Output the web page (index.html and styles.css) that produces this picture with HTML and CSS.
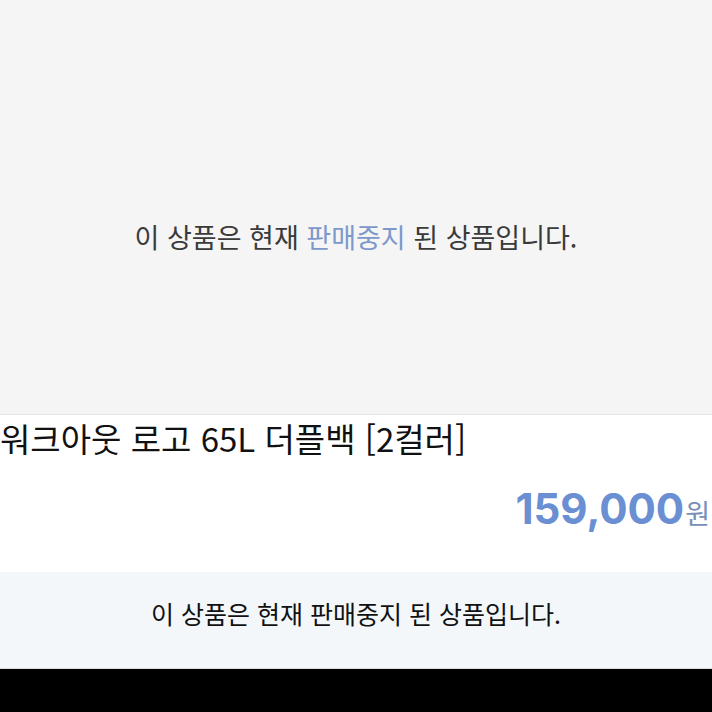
FILE: index.html
```html
<!DOCTYPE html>
<html lang="ko">

<head>
    <meta charset="UTF-8">
    <meta name="viewport" content="width=device-width, initial-scale=1.0">
    <title>상품 상세</title>
    <link rel="stylesheet" href="styles.css">
</head>

<body>
    <section class="product_pic">
        <p class="sold_out">이 상품은 현재 <span class="point">판매중지</span> 된 상품입니다.</p>
    </section>

    <section class="product_info">
        <h2 class="name">워크아웃 로고 65L 더플백 [2컬러]</h2>
        <div class="price">
            <strong>159,000</strong><span class="won">원</span>
        </div>
    </section>

    <div class="stop_bar">
        <p>이 상품은 현재 판매중지 된 상품입니다.</p>
    </div>

    <div class="bottom_black"></div>
</body>

</html>
```

FILE: styles.css
```css
* {
    box-sizing: border-box;
}

body {
    margin: 0;
    font-family: "Noto Sans CJK KR", "Noto Sans", sans-serif;
    background: #000;
}

.product_pic {
    height: 415px;
    background: #f5f5f5;
    border-bottom: 1px solid #e4e4e4;
    display: flex;
    justify-content: center;
    padding-top: 218px;
}

.sold_out {
    margin: 0;
    font-size: 27px;
    line-height: 38px;
    color: #3a3a3a;
}

.sold_out .point {
    color: #7d98cb;
}

.product_info {
    background: #fff;
    height: 157px;
    padding: 0 2px 0 0;
}

.name {
    margin: 0;
    font-size: 33px;
    font-weight: 400;
    line-height: 46px;
    color: #111;
}

.price {
    text-align: right;
    margin-top: 22px;
    color: #6a8fd2;
}

.price strong {
    font-family: Inter, "Liberation Sans", sans-serif;
    font-size: 42px;
    font-weight: 700;
}

.price .won {
    font-size: 27px;
    color: #7890b8;
    margin-left: 1px;
}

.stop_bar {
    height: 97px;
    background: #f4f7fa;
    border-bottom: 1px solid #d9dde0;
    display: flex;
    justify-content: center;
    align-items: center;
    padding-bottom: 14px;
}

.stop_bar p {
    margin: 0;
    font-size: 25px;
    color: #111;
}

.bottom_black {
    height: 44px;
    background: #000;
}
```
